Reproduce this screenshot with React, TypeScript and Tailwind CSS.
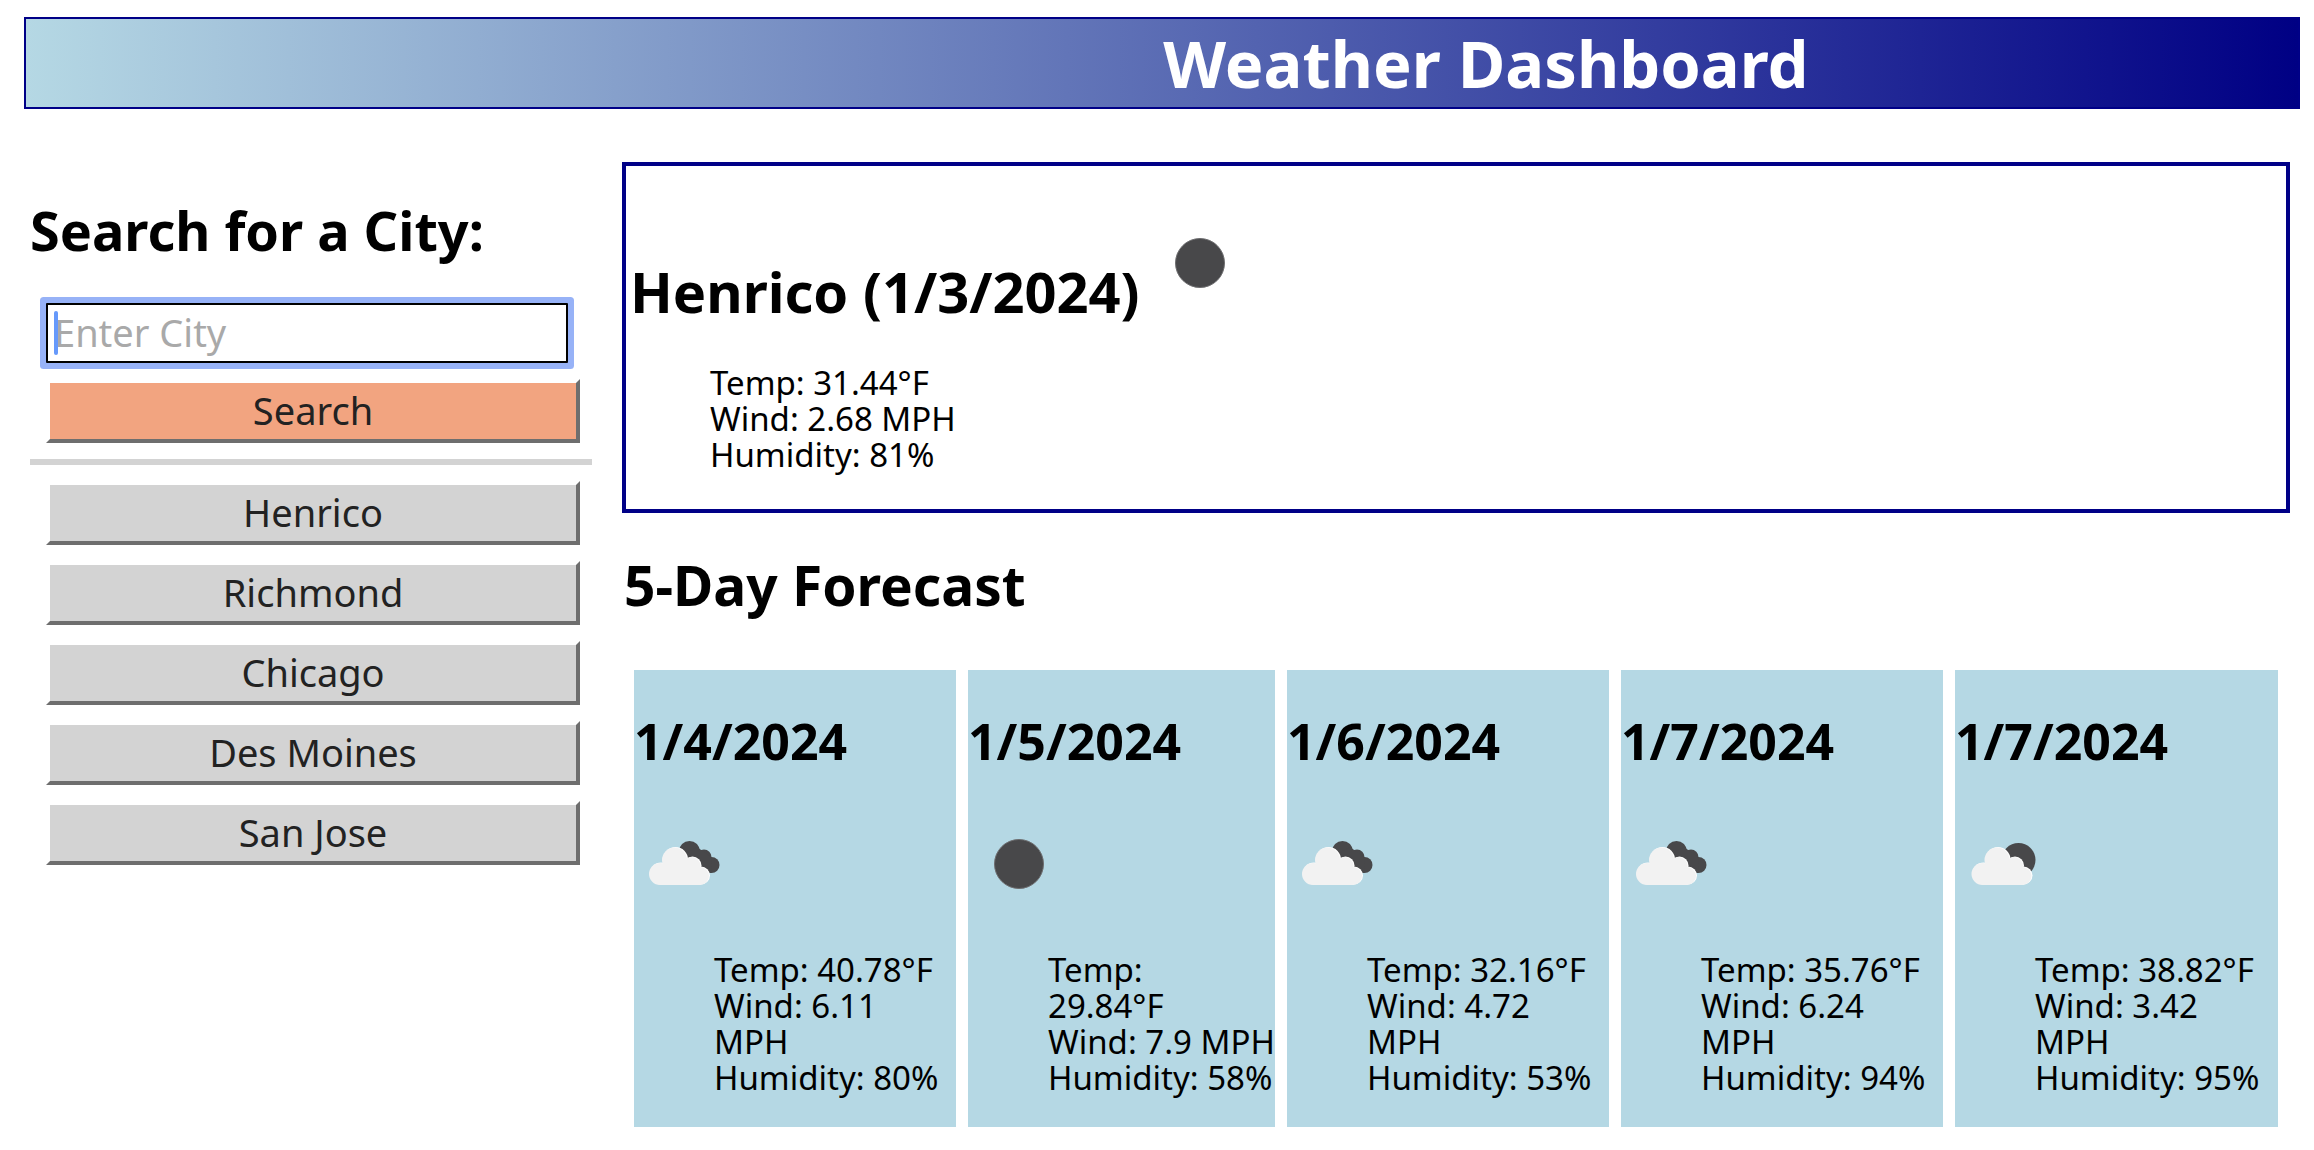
type IconKind = "clear" | "broken" | "few";

interface Forecast {
  id: number;
  date: string;
  icon: IconKind;
  temp: string;
  wind: string;
  humidity: string;
}

const cities = ["Henrico", "Richmond", "Chicago", "Des Moines", "San Jose"];

const forecasts: Forecast[] = [
  { id: 1, date: "1/4/2024", icon: "broken", temp: "Temp: 40.78°F", wind: "Wind: 6.11\nMPH", humidity: "Humidity: 80%" },
  { id: 2, date: "1/5/2024", icon: "clear", temp: "Temp:\n29.84°F", wind: "Wind: 7.9 MPH", humidity: "Humidity: 58%" },
  { id: 3, date: "1/6/2024", icon: "broken", temp: "Temp: 32.16°F", wind: "Wind: 4.72\nMPH", humidity: "Humidity: 53%" },
  { id: 4, date: "1/7/2024", icon: "broken", temp: "Temp: 35.76°F", wind: "Wind: 6.24\nMPH", humidity: "Humidity: 94%" },
  { id: 5, date: "1/7/2024", icon: "few", temp: "Temp: 38.82°F", wind: "Wind: 3.42\nMPH", humidity: "Humidity: 95%" },
];

function FrontCloud() {
  return (
    <>
      <circle cx="25" cy="60" r="11" />
      <circle cx="39.500" cy="46" r="12.500" />
      <circle cx="56.500" cy="52" r="9" />
      <circle cx="65" cy="62" r="9" />
      <path d="M25 71V55L39 46L57 50L67 60L65 71Z" />
    </>
  );
}

function WeatherIcon({ kind }: { kind: IconKind }) {
  return (
    <svg viewBox="0 0 100 100" className="size-[100px] shrink-0" aria-hidden="true">
      {kind === "clear" && <circle cx="50" cy="50" r="24.500" fill="#48484a" stroke="#6e6e70" strokeWidth="1" />}
      {kind === "broken" && (
        <g fill="#48484a">
          <circle cx="54.500" cy="37.500" r="10.500" />
          <circle cx="69" cy="43" r="7.500" />
          <circle cx="76.500" cy="51" r="8" />
          <path d="M46 42L62 33L77 44L76 59L66 57Z" />
        </g>
      )}
      {kind === "few" && <circle cx="62.500" cy="46" r="17" fill="#48484a" />}
      {kind !== "clear" && (
        <g transform={kind === "few" ? "translate(1.500 0)" : undefined}>
          <g fill="#ffffff" transform="translate(1 -0.5)">
            <FrontCloud />
          </g>
          <g fill="#f2f2f2">
            <FrontCloud />
          </g>
        </g>
      )}
    </svg>
  );
}

function Readings({ items }: { items: string[] }) {
  return (
    <ul className="pl-20 text-[33px] leading-9">
      {items.map((item) => (
        <li key={item} className="whitespace-pre">
          {item}
        </li>
      ))}
    </ul>
  );
}

const buttonClass =
  "h-16 w-full border-4 border-t-white border-r-[#6e6e6e] border-b-[#6e6e6e] border-l-white pb-0.5 text-[38px] leading-none text-[#222222]";

function Sidebar() {
  return (
    <aside className="flex flex-col pt-9">
      <h2 className="text-[54px] leading-16 font-bold">
        <label htmlFor="city">Search for a City:</label>
      </h2>
      <form className="mt-[41px] flex flex-col gap-4 pr-3 pl-4" onSubmit={(e) => e.preventDefault()}>
        <div className="relative mr-3">
          <input
            id="city"
            type="text"
            placeholder="Enter City"
            className="block h-[60px] w-full rounded-[1px] border-2 border-black bg-white px-1.5 pb-0.5 text-[38px] leading-none ring-6 ring-[#97b2f7] outline-none placeholder:text-[#a9a9a9] placeholder:opacity-100"
          />
          <span className="absolute inset-y-2 left-2 w-1 rounded-sm bg-[#6699fb]" />
        </div>
        <button type="submit" className={`${buttonClass} bg-[#f2a480]`}>
          Search
        </button>
      </form>
      <hr className="my-4 h-1.5 border-0 bg-[#d3d3d3]" />
      <div className="flex flex-col gap-4 pr-3 pl-4">
        {cities.map((city) => (
          <button key={city} type="button" className={`${buttonClass} bg-[#d3d3d3]`}>
            {city}
          </button>
        ))}
      </div>
    </aside>
  );
}

export default function App() {
  return (
    <div className="min-h-screen bg-white pt-[17px] font-['Noto_Sans',sans-serif] text-black">
      <header className="mr-3.5 ml-6 border-2 border-[#000087] bg-linear-to-r/srgb from-[#b5d8e4] to-[#000084] pl-[28%]">
        <h1 className="text-center text-[65px] leading-[88px] font-bold text-white">Weather Dashboard</h1>
      </header>
      <div className="mt-[53px] mr-6 ml-[30px] grid grid-cols-[281fr_834fr] gap-[30px]">
        <Sidebar />
        <main className="min-w-0">
          <section className="border-4 border-[#000087] px-1 pt-[47px] pb-9">
            <div className="flex items-baseline gap-2.5">
              <h2 className="text-[56px] leading-16 font-bold">Henrico (1/3/2024)</h2>
              <WeatherIcon kind="clear" />
            </div>
            <div className="mt-[42px]">
              <Readings items={["Temp: 31.44°F", "Wind: 2.68 MPH", "Humidity: 81%"]} />
            </div>
          </section>
          <section>
            <h2 className="mt-10 pl-0.5 text-[55px] leading-16 font-bold">5-Day Forecast</h2>
            <div className="mt-[53px] grid grid-cols-[322fr_307fr_322fr_322fr_323fr] gap-3 px-3">
              {forecasts.map((day) => (
                <article key={day.id} className="min-w-0 bg-[#b5d8e4] pt-[41px] pb-[31px]">
                  <h3 className="text-[50px] leading-[60px] font-bold">{day.date}</h3>
                  <div className="mt-[43px] mb-[38px] pl-px">
                    <WeatherIcon kind={day.icon} />
                  </div>
                  <Readings items={[day.temp, day.wind, day.humidity]} />
                </article>
              ))}
            </div>
          </section>
        </main>
      </div>
    </div>
  );
}
